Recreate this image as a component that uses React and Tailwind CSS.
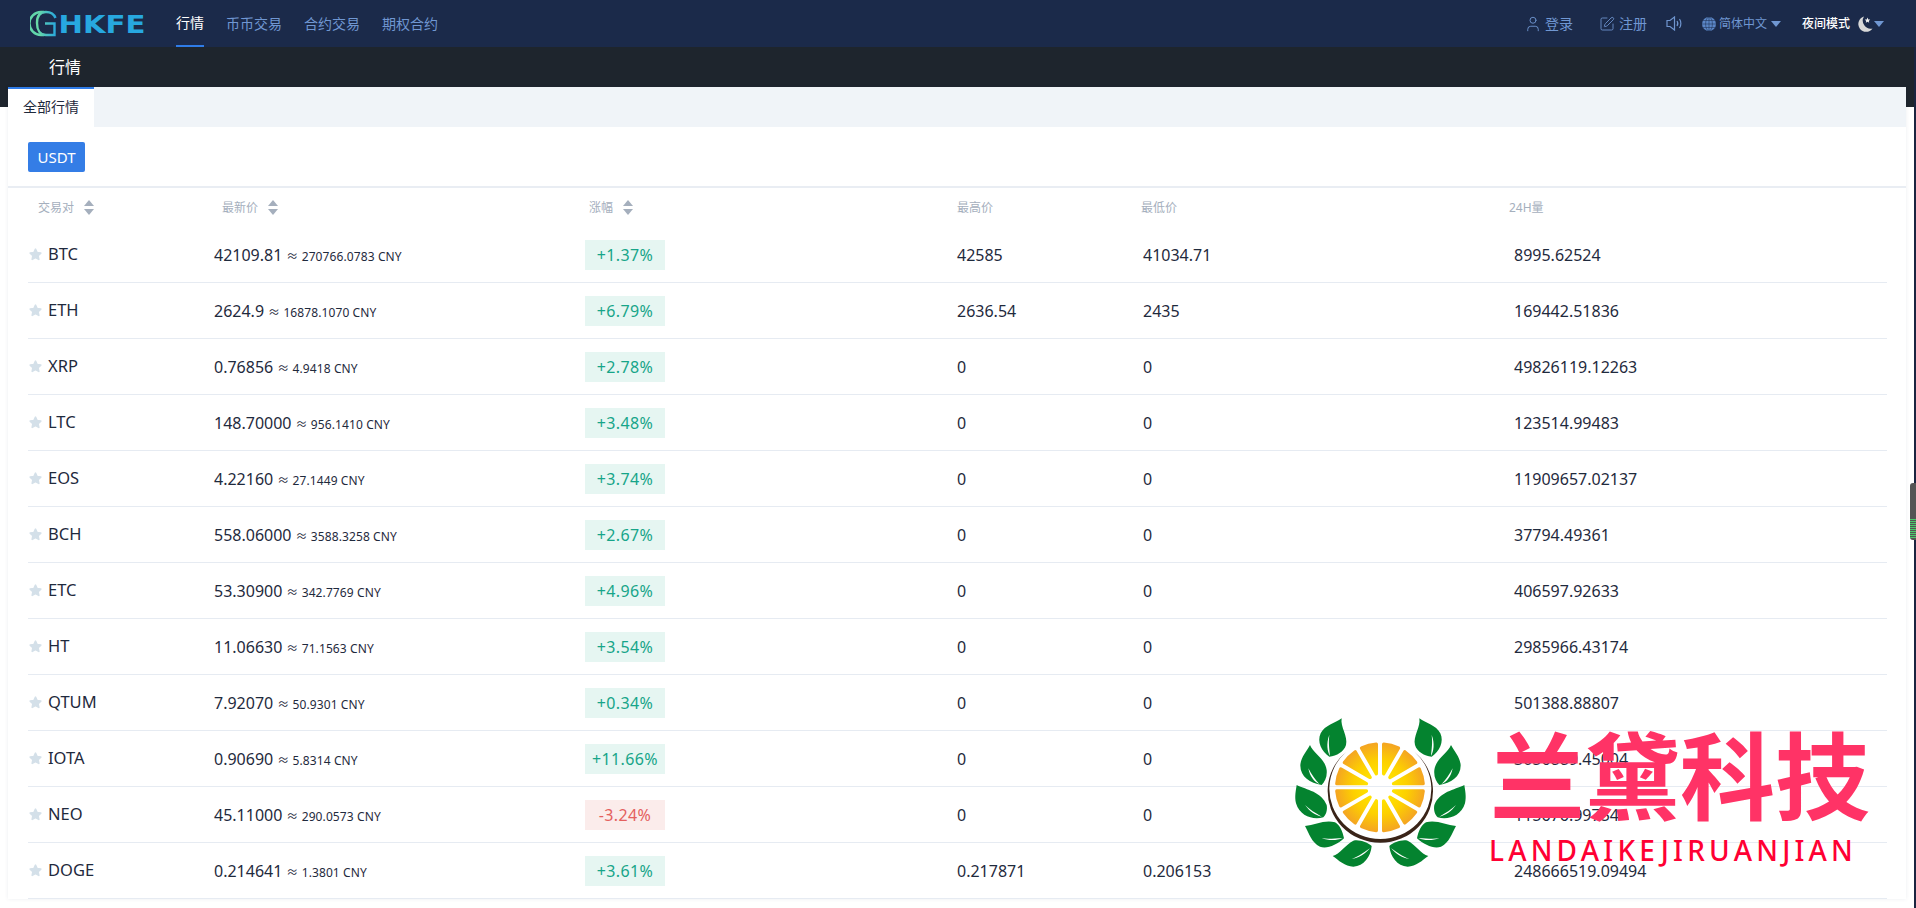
import React from "react";
import { User, SquarePen } from "lucide-react";

const FONT = "font-['Noto_Sans','Noto_Sans_CJK_SC',sans-serif]";

const rows = [
  ["BTC", "42109.81", "270766.0783", "+1.37%", "42585", "41034.71", "8995.62524"],
  ["ETH", "2624.9", "16878.1070", "+6.79%", "2636.54", "2435", "169442.51836"],
  ["XRP", "0.76856", "4.9418", "+2.78%", "0", "0", "49826119.12263"],
  ["LTC", "148.70000", "956.1410", "+3.48%", "0", "0", "123514.99483"],
  ["EOS", "4.22160", "27.1449", "+3.74%", "0", "0", "11909657.02137"],
  ["BCH", "558.06000", "3588.3258", "+2.67%", "0", "0", "37794.49361"],
  ["ETC", "53.30900", "342.7769", "+4.96%", "0", "0", "406597.92633"],
  ["HT", "11.06630", "71.1563", "+3.54%", "0", "0", "2985966.43174"],
  ["QTUM", "7.92070", "50.9301", "+0.34%", "0", "0", "501388.88807"],
  ["IOTA", "0.90690", "5.8314", "+11.66%", "0", "0", "3056889.45004"],
  ["NEO", "45.11000", "290.0573", "-3.24%", "0", "0", "115676.99754"],
  ["DOGE", "0.214641", "1.3801", "+3.61%", "0.217871", "0.206153", "248666519.09494"],
];

function Caret({ className = "" }) {
  return (
    <svg width="10" height="6" viewBox="0 0 10 6" className={className}>
      <path d="M0 0H10L5 6Z" fill="currentColor" />
    </svg>
  );
}

function Sorter() {
  return (
    <svg width="10" height="15" viewBox="0 0 10 15" className="ml-[10px]">
      <path d="M5 0L10 6H0Z" fill="#a5afbd" />
      <path d="M5 15L0 9H10Z" fill="#a5afbd" />
    </svg>
  );
}

function Star() {
  return (
    <svg width="13" height="13" viewBox="0 0 13 13" className="mr-[6px] ml-[1px] shrink-0">
      <path
        d="M6.5 1.2L8.1 4.6L11.8 5.1L9.1 7.6L9.8 11.4L6.5 9.6L3.2 11.4L3.9 7.6L1.2 5.1L4.9 4.6Z"
        fill="#d4e0e9"
        stroke="#d4e0e9"
        strokeWidth="1.6"
        strokeLinejoin="round"
      />
    </svg>
  );
}

function Logo() {
  return (
    <svg width="116" height="27" viewBox="0 0 116 27" className="shrink-0">
      <defs>
        <linearGradient id="cg" x1="0" y1="0" x2="1" y2="0">
          <stop offset="0" stopColor="#6ad9a6" />
          <stop offset="1" stopColor="#2aa9dc" />
        </linearGradient>
      </defs>
      <path d="M14 2H11A11 11 0 0 0 11 25H14" fill="none" stroke="#62d6aa" strokeWidth="2.4" />
      <path d="M7 13C7 6 10 2 16 2C21 2 24 4 25.5 8M7 13C7 20 10 25 16 25H24.5V13.5H15" fill="none" stroke="url(#cg)" strokeWidth="2.4" />
      <text
        x="28.5"
        y="22.5"
        textLength="87"
        lengthAdjust="spacingAndGlyphs"
        fill="#27a8e0"
        className="font-['DejaVu_Sans',sans-serif] font-bold"
        fontSize="25"
      >
        HKFE
      </text>
    </svg>
  );
}

function SpeakerIcon() {
  return (
    <svg width="17" height="15" viewBox="0 0 17 15" fill="none" stroke="#6f95cf" strokeWidth="1.2" className="shrink-0">
      <path d="M1 4.5H4L8.5 1V14L4 10.5H1Z" />
      <path d="M11 5C12 6.5 12 8.5 11 10" />
      <path d="M13.5 3C15.3 5.5 15.3 9.5 13.5 12" />
    </svg>
  );
}

function GlobeIcon() {
  return (
    <svg width="14" height="14" viewBox="0 0 14 14" className="shrink-0">
      <circle cx="7" cy="7" r="7" fill="#5b86c6" />
      <g fill="none" stroke="#1b2a4a" strokeWidth="0.5">
        <ellipse cx="7" cy="7" rx="3.4" ry="7" />
        <path d="M7 0V14M0 7H14M1 3.5H13M1 10.5H13" />
      </g>
    </svg>
  );
}

function MoonIcon() {
  return (
    <svg width="16" height="16" viewBox="0 0 16 16" className="shrink-0">
      <path d="M7 0.5A7.8 7.8 0 1 0 15.5 12.5A8 8 0 0 1 7 0.5Z" fill="#d8d8d8" />
      <path d="M10.5 1.5L11.3 3.4L13.2 3.6L11.8 4.9L12.2 6.8L10.5 5.8L8.8 6.8L9.2 4.9L7.8 3.6L9.7 3.4Z" fill="#f2f2f2" />
    </svg>
  );
}

const leaves = [
  {
    d: "M155 25C150 50 175 80 168 105C162 125 140 138 118 140C95 125 80 95 92 70C105 45 135 40 155 25Z",
    v: "M118 75C108 100 112 125 120 138C118 115 115 100 118 75Z",
  },
  {
    d: "M60 105C70 130 105 145 110 180C112 200 105 215 95 225C60 220 30 200 31 165C33 140 50 125 60 105Z",
    v: "M55 175C60 200 72 215 88 222C75 208 65 195 55 175Z",
  },
  {
    d: "M20 225C50 240 95 245 110 285C113 300 108 315 100 322C70 330 30 320 18 280C13 260 18 240 20 225Z",
    v: "M45 285C60 305 75 315 95 320C75 308 60 300 45 285Z",
  },
  {
    d: "M45 348C75 345 105 328 135 337C150 345 158 365 162 385C140 405 110 418 90 410C65 398 58 372 45 348Z",
    v: "M95 385C115 392 140 392 158 385C135 385 115 388 95 385Z",
  },
  {
    d: "M128 438C150 432 165 405 190 392C210 388 232 398 245 408C242 440 222 468 190 470C165 470 145 450 128 438Z",
    v: "M185 447C205 445 225 432 240 415C225 425 205 440 185 447Z",
  },
];

function wedge(i) {
  const cx = 270;
  const cy = 232;
  const a = (i * 30 * Math.PI) / 180;
  const off = (4.85 * Math.PI) / 180;
  const mid = a + Math.PI / 12;
  const R = 130;
  const pt = (r, t) => `${(cx + r * Math.cos(t)).toFixed(1)} ${(cy + r * Math.sin(t)).toFixed(1)}`;
  return `M${pt(42, mid)}L${pt(R, a + off)}A${R} ${R} 0 0 1 ${pt(R, a + Math.PI / 6 - off)}Z`;
}

function WatermarkEmblem() {
  return (
    <svg width="200" height="170" viewBox="0 0 600 510" className="shrink-0">
      <defs>
        <radialGradient id="og" gradientUnits="userSpaceOnUse" cx="270" cy="232" r="135">
          <stop offset="0.2" stopColor="#ffe600" />
          <stop offset="0.6" stopColor="#fdd000" />
          <stop offset="1" stopColor="#f4a423" />
        </radialGradient>
      </defs>
      {Array.from({ length: 12 }, (_, i) => (
        <path key={i} d={wedge(i)} fill="url(#og)" stroke="url(#og)" strokeWidth="10" strokeLinejoin="round" />
      ))}
      <path d="M169 125A158 155 0 1 0 373 125A153 150 0 1 1 169 125Z" fill="#3a2418" />
      {leaves.map((l, i) => (
        <g key={i}>
          <path d={l.d} fill="#04832f" />
          <path d={l.v} fill="#ffffff" />
        </g>
      ))}
      <g transform="translate(543 0) scale(-1 1)">
        {leaves.map((l, i) => (
          <g key={i}>
            <path d={l.d} fill="#04832f" />
            <path d={l.v} fill="#ffffff" />
          </g>
        ))}
      </g>
    </svg>
  );
}

export default function App() {
  return (
    <div className={`${FONT} relative w-[1916px] h-[908px] overflow-hidden bg-white text-[#1f2a3d]`}>
      <header className="h-[47px] bg-[#1b2a4a] flex items-center pl-[30px] pr-[32px]">
        <Logo />
        <nav className="flex h-full ml-[30px] gap-[22px] text-[14px]">
          <a className="h-full flex items-center text-white border-b-2 border-[#2f7ce8]">行情</a>
          <a className="h-full flex items-center text-[#7097d2]">币币交易</a>
          <a className="h-full flex items-center text-[#7097d2]">合约交易</a>
          <a className="h-full flex items-center text-[#7097d2]">期权合约</a>
        </nav>
        <div className="ml-auto flex items-center text-[#7097d2]">
          <User size={18} strokeWidth={1.2} />
          <span className="ml-[3px] text-[14px]">登录</span>
          <SquarePen size={16} strokeWidth={1.3} className="ml-[26px]" />
          <span className="ml-[4px] text-[14px]">注册</span>
          <span className="ml-[19px] flex">
            <SpeakerIcon />
          </span>
          <span className="ml-[19px] flex">
            <GlobeIcon />
          </span>
          <span className="ml-[3px] text-[12px]">简体中文</span>
          <Caret className="ml-[4px]" />
          <span className="ml-[21px] text-[12px] text-white font-medium">夜间模式</span>
          <span className="ml-[7px] flex">
            <MoonIcon />
          </span>
          <Caret className="ml-[1px]" />
        </div>
      </header>

      <div className="h-[60px] bg-[#1e252d] pl-[49px] text-[16px] text-white">
        <div className="h-[40px] leading-[40px]">行情</div>
      </div>

      <main className="-mt-[20px] mx-[8px] w-[1898px] relative bg-white shadow-[0_0_4px_rgba(30,50,80,0.08)]">
        <div className="h-[40px] bg-[#f0f4f8] flex">
          <div className="w-[86px] h-full bg-white border-t-2 border-[#2f7ce8] flex items-center justify-center pb-[4px] text-[14px] text-[#1f2a3d]">
            全部行情
          </div>
        </div>
        <div className="h-[61px] pl-[20px] pt-[15px] border-b-2 border-[#e9edf3]">
          <button className="w-[57px] h-[30px] rounded-[2px] bg-[#347de6] text-white text-[15px]">USDT</button>
        </div>
        <div className="pl-[20px] pr-[19px]">
          <div className="h-[39px] pl-[10px] grid grid-cols-[184px_367px_368px_184px_368px_1fr] items-center text-[12px] text-[#a5afbd]">
            <div className="flex items-center">交易对<Sorter /></div>
            <div className="flex items-center">最新价<Sorter /></div>
            <div className="flex items-center">涨幅<Sorter /></div>
            <div>最高价</div>
            <div>最低价</div>
            <div>24H量</div>
          </div>
          {rows.map((r) => {
            const down = r[3].startsWith("-");
            return (
              <div
                key={r[0]}
                className="h-[56px] border-b border-[#e6ebf2] grid grid-cols-[186px_371px_372px_186px_371px_1fr] items-center text-[16px]"
              >
                <div className="flex items-center">
                  <Star />
                  <span className="text-[16.5px]">{r[0]}</span>
                </div>
                <div className="flex items-baseline">
                  <span>{r[1]}</span>
                  <span className="ml-[4px] text-[12px] tracking-[0.1px]">≈ {r[2]} CNY</span>
                </div>
                <div>
                  <span
                    className={`inline-flex w-[80px] h-[30px] items-center justify-center text-[16px] tracking-[0.4px] ${
                      down ? "bg-[#fbeceb] text-[#e4605e]" : "bg-[#e6f6f2] text-[#17a589]"
                    }`}
                  >
                    {r[3]}
                  </span>
                </div>
                <div>{r[4]}</div>
                <div>{r[5]}</div>
                <div>{r[6]}</div>
              </div>
            );
          })}
        </div>
      </main>

      <div className="absolute right-0 top-[47px] bottom-0 w-[2px] bg-[#1b2540]" />
      <div className="absolute right-0 top-[483px] w-[6px] h-[57px] rounded-l-[3px] bg-[#555] overflow-hidden flex flex-col justify-end pb-[2px] gap-[1px]">
        {Array.from({ length: 10 }, (_, i) => (
          <div key={i} className="h-[1px] bg-[#4cc96a]" />
        ))}
      </div>

      <div className="absolute left-[1290px] top-[710px]">
        <WatermarkEmblem />
      </div>
      <div className="absolute left-[1490px] top-[710px] text-[95px] leading-[124px] font-bold text-[#ff3366] font-['Noto_Sans_CJK_SC',sans-serif] whitespace-nowrap">
        兰黛科技
      </div>
      <div className="absolute left-[1489px] top-[830px] text-[28px] leading-[40px] tracking-[4.2px] font-medium text-[#ff0033] whitespace-nowrap">
        LANDAIKEJIRUANJIAN
      </div>
    </div>
  );
}
